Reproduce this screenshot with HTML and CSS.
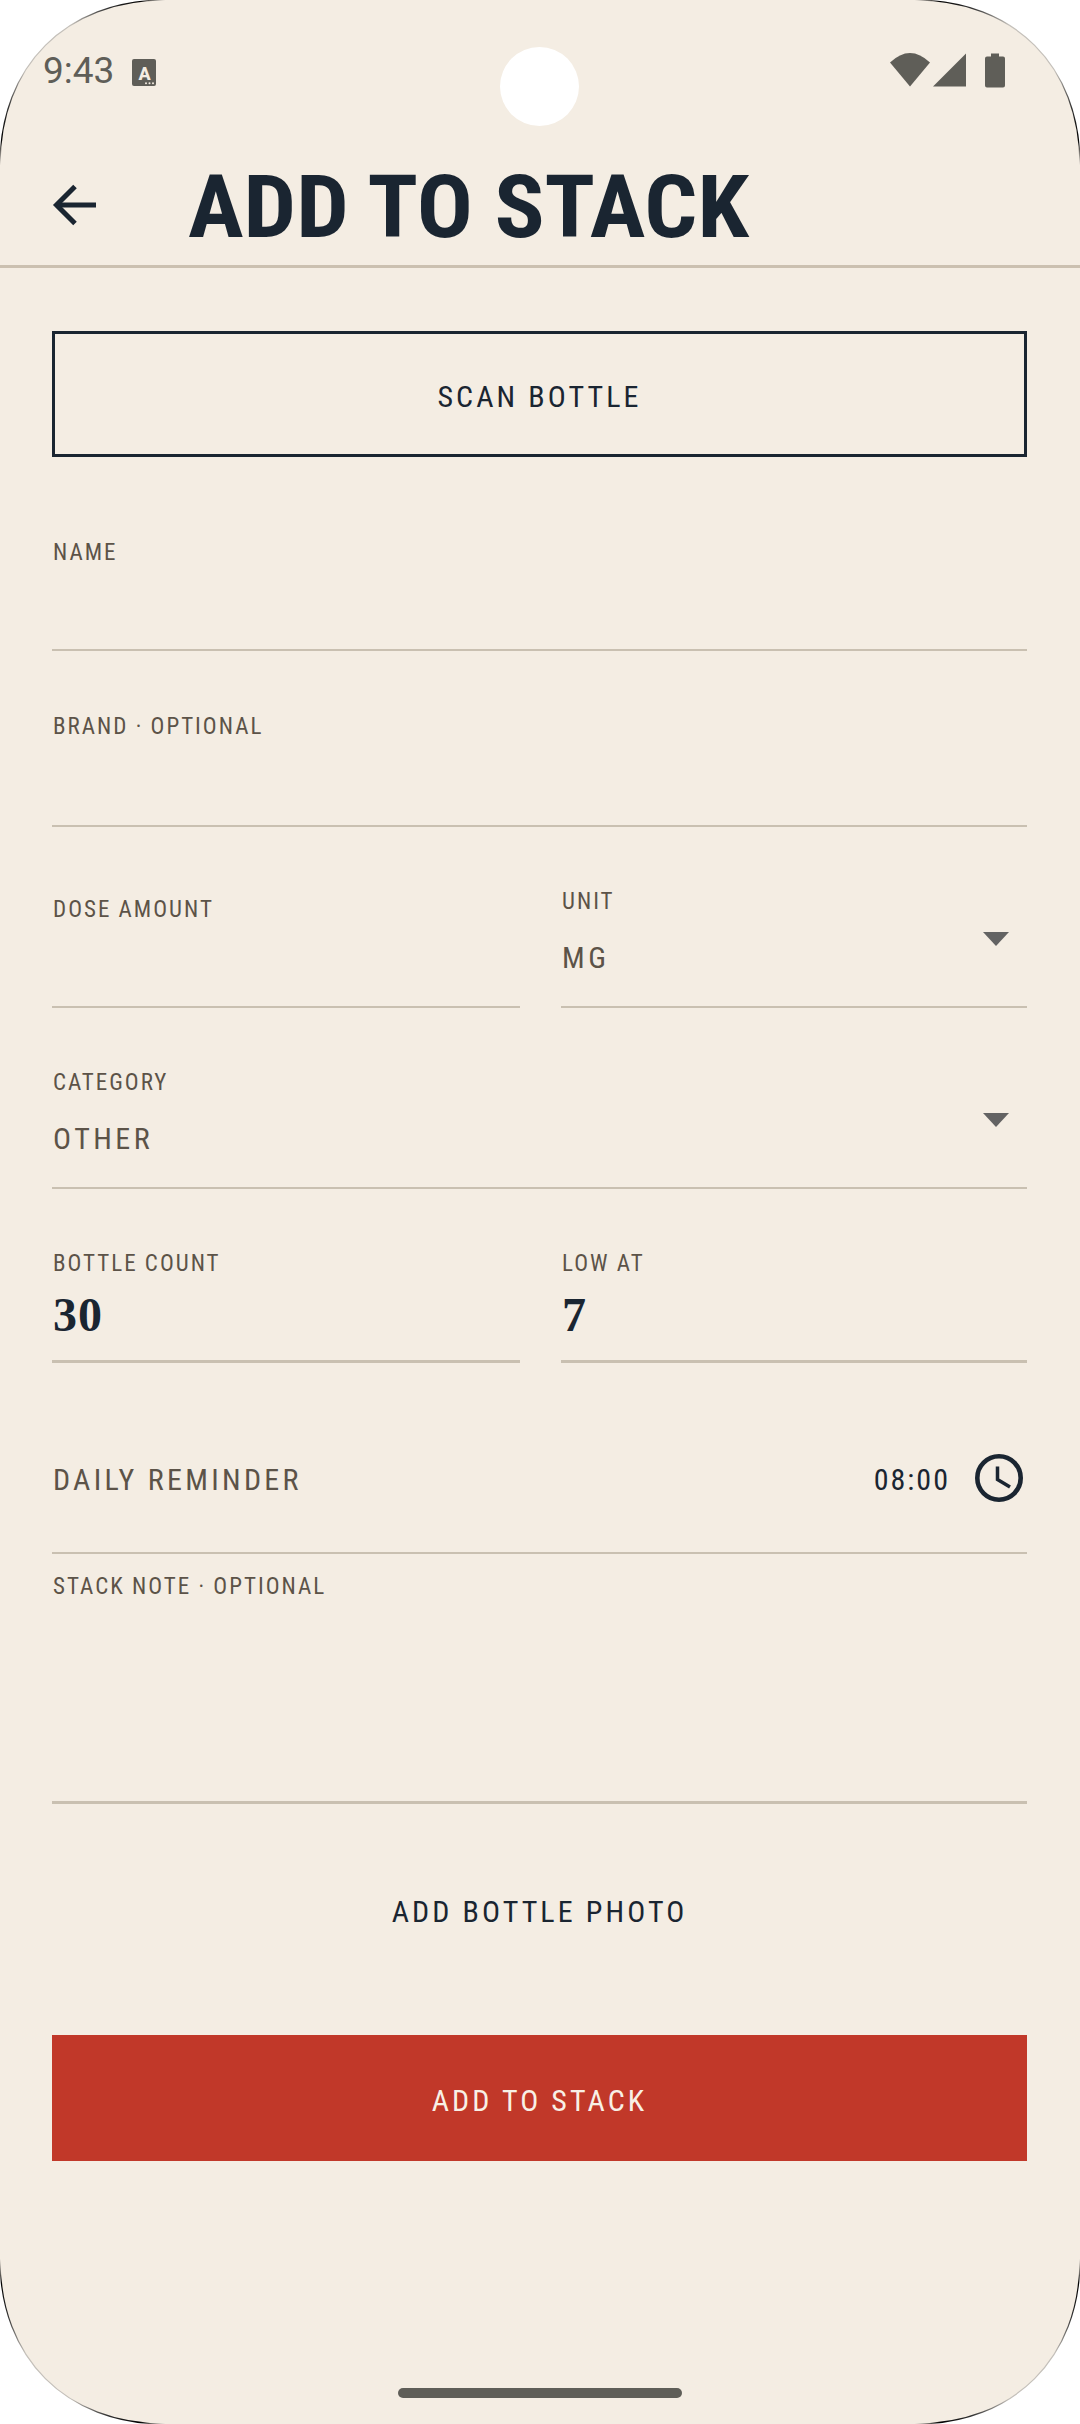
FILE: index.html
```html
<!DOCTYPE html>
<html lang="en">
<head>
  <meta charset="UTF-8" />
  <meta name="viewport" content="width=device-width, initial-scale=1.0" />
  <title>Add to stack</title>
  <link rel="stylesheet" href="styles.css">
</head>
<body>
  <div class="phone">
    <header class="statusbar">
      <div class="status-left">
        <span class="clock">9:43</span>
        <svg class="a-icon" width="24" height="27" viewBox="0 0 24 27">
          <rect width="24" height="27" rx="2" fill="#5f5e58"/>
          <text x="12.500" y="21" text-anchor="middle" font-family="Roboto" font-size="18" font-weight="800" fill="#f4ede3">A</text>
          <circle cx="14" cy="24.300" r="1" fill="#f4ede3"/><circle cx="17.500" cy="24.300" r="1" fill="#f4ede3"/><circle cx="21" cy="24.300" r="1" fill="#f4ede3"/>
        </svg>
      </div>
      <div class="camera"></div>
      <div class="status-right">
        <svg width="40" height="34" viewBox="0 0 40 34"><path d="M0 9.500 Q20 -9.500 40 9.500 L20 33.500 Z" fill="#5f5e58"/></svg>
        <svg class="signal" width="33" height="34" viewBox="0 0 33 34"><path d="M33 0.500 V33.500 H0 Z" fill="#5f5e58"/></svg>
        <svg class="battery" width="20" height="35" viewBox="0 0 20 35"><path d="M6 0.500 H14 V3.500 H18 Q20 3.500 20 5.500 V32.500 Q20 34.500 18 34.500 H2 Q0 34.500 0 32.500 V5.500 Q0 3.500 2 3.500 H6 Z" fill="#5f5e58"/></svg>
      </div>
    </header>

    <div class="topbar">
      <svg class="back" width="44" height="44" viewBox="0 0 44 44" fill="none" stroke="#1a2531" stroke-width="5">
        <path d="M44 22 H5"/><path d="M23 3.500 L4.500 22 L23 40.500"/>
      </svg>
      <h1>ADD TO STACK</h1>
    </div>

    <main class="form">
      <button class="btn-outline">SCAN BOTTLE</button>

      <div class="field field-name"><label>NAME</label></div>
      <div class="field field-brand"><label>BRAND · OPTIONAL</label></div>

      <div class="row row-dose">
        <div class="field"><label>DOSE AMOUNT</label></div>
        <div class="field select">
          <label>UNIT</label>
          <span class="select-value">MG</span>
          <span class="caret"></span>
        </div>
      </div>

      <div class="field select field-category">
        <label>CATEGORY</label>
        <span class="select-value">OTHER</span>
        <span class="caret"></span>
      </div>

      <div class="row row-count">
        <div class="field thick"><label>BOTTLE COUNT</label><span class="num">30</span></div>
        <div class="field thick"><label>LOW AT</label><span class="num">7</span></div>
      </div>

      <div class="reminder">
        <span class="reminder-label">DAILY REMINDER</span>
        <span class="reminder-time">08:00</span>
        <svg width="48" height="48" viewBox="0 0 48 48" fill="none" stroke="#1a2531">
          <circle cx="24" cy="24" r="21.700" stroke-width="4.600"/>
          <path d="M22.500 12.500 V25.500 L35 33" stroke-width="3.500"/>
        </svg>
      </div>

      <div class="field thick field-note"><label>STACK NOTE · OPTIONAL</label></div>

      <button class="btn-text">ADD BOTTLE PHOTO</button>
      <button class="btn-primary">ADD TO STACK</button>
    </main>

    <div class="home-bar"></div>

    <!-- screen corners, one shape flipped four times -->
    <svg class="corner tl" width="165" height="165" viewBox="0 0 165 165"><use href="#corner-shape"/></svg>
    <svg class="corner tr" width="165" height="165" viewBox="0 0 165 165"><use href="#corner-shape"/></svg>
    <svg class="corner bl" width="165" height="165" viewBox="0 0 165 165"><use href="#corner-shape"/></svg>
    <svg class="corner br" width="165" height="165" viewBox="0 0 165 165"><use href="#corner-shape"/></svg>
  </div>

  <svg width="0" height="0" class="defs">
    <defs>
      <linearGradient id="corner-line" gradientUnits="userSpaceOnUse" x1="0" y1="165" x2="165" y2="0">
        <stop offset="0" stop-color="#f4ede3"/>
        <stop offset="0.08" stop-color="#000"/>
        <stop offset="0.2" stop-color="#333"/>
        <stop offset="0.36" stop-color="#c4c0ba"/>
        <stop offset="0.64" stop-color="#c4c0ba"/>
        <stop offset="0.8" stop-color="#333"/>
        <stop offset="0.92" stop-color="#000"/>
        <stop offset="1" stop-color="#f4ede3"/>
      </linearGradient>
      <g id="corner-shape">
        <path d="M0 0 H165 C66 0 0 66 0 165 Z" fill="#fff"/>
        <path d="M0 165 C0 66 66 0 165 0" fill="none" stroke="url(#corner-line)" stroke-width="1.200"/>
      </g>
    </defs>
  </svg>
</body>
</html>
```

FILE: styles.css
```css
* { margin: 0; padding: 0; box-sizing: border-box; }
html, body { width: 1080px; height: 2424px; background: #fff; overflow: hidden; }
body { font-family: 'Roboto', 'Liberation Sans', sans-serif; color: #1a2531; }
button { font-family: inherit; }
.defs { position: absolute; }

.phone { position: relative; width: 1080px; height: 2424px; background: #f4ede3; display: flex; flex-direction: column; overflow: hidden; }

.corner { position: absolute; }
.corner.tl { left: 0; top: 0; }
.corner.tr { right: 0; top: 0; transform: scaleX(-1); }
.corner.bl { left: 0; bottom: 0; transform: scaleY(-1); }
.corner.br { right: 0; bottom: 0; transform: scale(-1, -1); }

.statusbar { display: flex; justify-content: space-between; align-items: flex-start; height: 160px; padding: 53px 75px 0 43px; }
.status-left { display: flex; align-items: center; gap: 18px; }
.clock { font-size: 37px; line-height: 36px; color: #5f5e58; }
.a-icon { margin-top: 2px; }
.camera { position: absolute; left: 500px; top: 47px; width: 79px; height: 79px; border-radius: 50%; background: #fff; }
.status-right { display: flex; align-items: flex-start; }
.signal { margin-left: 3px; }
.battery { margin-left: 19px; }

.topbar { display: flex; align-items: center; height: 108px; padding: 0 0 15px 52px; border-bottom: 3px solid #cbc0b0; }
.back { flex: none; }
h1 { margin: 3px 0 0 92px; font-size: 87px; line-height: 90px; font-weight: 700; font-stretch: 75%; color: #1a2531; white-space: nowrap; transform: scaleX(1.07); transform-origin: left center; }

.form { padding: 63px 53px 0 52px; display: flex; flex-direction: column; }

.btn-outline, .btn-text, .btn-primary { font-size: 30px; font-weight: 450; font-stretch: 75%; letter-spacing: 3.100px; color: #1a2531; background: none; border: none; }
.btn-outline { height: 126px; padding-top: 4px; border: 3px solid #1a2531; }
.btn-text { height: 231px; padding-bottom: 17px; }
.btn-primary { height: 126px; padding-top: 4px; background: #c13829; color: #f8f0e6; }

.field { position: relative; border-bottom: 2px solid #c9c0b1; }
.field label { display: block; padding-left: 1px; font-size: 23px; line-height: 26px; font-stretch: 75%; letter-spacing: 2px; color: #5c5348; }
.field.thick { border-bottom-width: 3px; }
.field-name { height: 194px; padding-top: 83px; }
.field-brand { height: 176px; padding-top: 63px; }

.row { display: grid; grid-template-columns: 468px 466px; column-gap: 41px; }
.row-dose .field { height: 181px; padding-top: 70px; }
.row-dose .select { padding-top: 62px; }

.select-value { display: block; margin-top: 25px; padding-left: 1px; font-size: 30px; line-height: 36px; font-stretch: 75%; letter-spacing: 3.500px; color: #5c5348; }
.caret { position: absolute; right: 18px; bottom: 60px; border-left: 13px solid transparent; border-right: 13px solid transparent; border-top: 14px solid #636363; }
.field-category { height: 181px; padding-top: 62px; }

.row-count .field { height: 174px; padding-top: 62px; }
.num { display: block; margin-top: 13px; padding-left: 1px; font: 700 48px/50px 'Liberation Serif', serif; letter-spacing: 1px; color: #1a2531; }

.reminder { display: flex; align-items: flex-start; height: 191px; padding: 91px 4px 0 1px; border-bottom: 2px solid #c9c0b1; }
.reminder-label { flex: 1; font-size: 30px; line-height: 52px; font-stretch: 75%; letter-spacing: 3.300px; color: #5c5348; }
.reminder-time { margin-right: 25px; font-size: 30px; line-height: 52px; font-stretch: 75%; letter-spacing: 2px; color: #1a2531; }

.field-note { height: 250px; padding-top: 20px; }

.home-bar { position: absolute; left: 398px; top: 2388px; width: 284px; height: 10px; border-radius: 5px; background: #5f5e58; }
```
